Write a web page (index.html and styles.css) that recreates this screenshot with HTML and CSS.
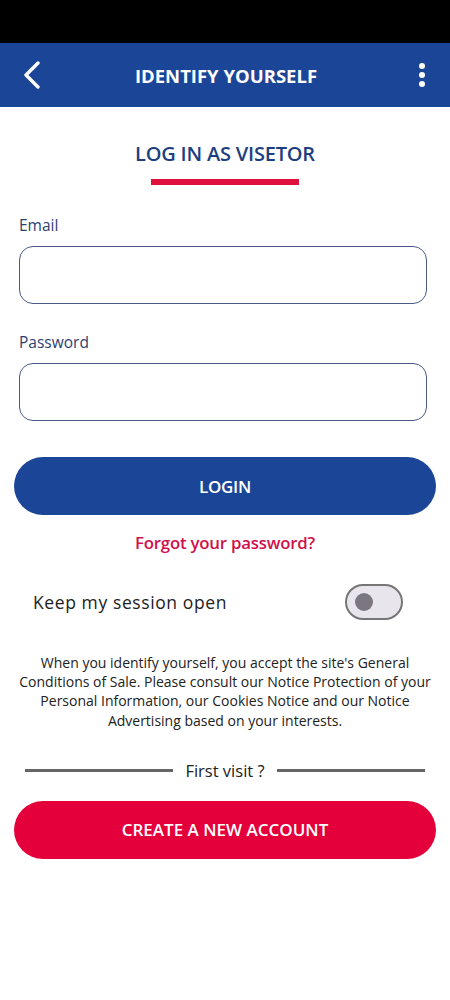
FILE: index.html
```html
<!DOCTYPE html>
<html lang="en">
<head>
    <meta charset="UTF-8">
    <meta name="viewport" content="width=device-width, initial-scale=1.0">
    <title>Identify yourself</title>
    <link rel="stylesheet" href="styles.css">
</head>
<body>
    <div class="status_bar"></div>
    <header class="top_bar">
        <a href="#" class="back">
            <svg width="18" height="28" viewBox="0 0 18 28">
                <path d="M15 2 L3 14 L15 26" fill="none" stroke="#fff" stroke-width="3.4" stroke-linecap="round" stroke-linejoin="round"/>
            </svg>
        </a>
        <h1>IDENTIFY YOURSELF</h1>
        <a href="#" class="more">
            <span></span><span></span><span></span>
        </a>
    </header>

    <main class="content">
        <h2 class="tab_title">LOG IN AS VISETOR</h2>
        <div class="tab_line"></div>

        <form class="login_form">
            <label class="field_label" for="email">Email</label>
            <input type="email" id="email" class="field">
            <label class="field_label" for="password">Password</label>
            <input type="password" id="password" class="field">

            <button type="button" class="btn btn_login">LOGIN</button>
        </form>

        <a href="#" class="forgot">Forgot your password?</a>

        <div class="session_row">
            <span>Keep my session open</span>
            <span class="toggle"><span class="knob"></span></span>
        </div>

        <p class="notice">When you identify yourself, you accept the site's General Conditions of Sale. Please consult our Notice Protection of your Personal Information, our Cookies Notice and our Notice Advertising based on your interests.</p>

        <div class="divider">
            <span class="line"></span>
            <span class="divider_text">First visit ?</span>
            <span class="line"></span>
        </div>

        <button type="button" class="btn btn_create">CREATE A NEW ACCOUNT</button>
    </main>
</body>
</html>
```

FILE: styles.css
```css
* {
    margin: 0;
    padding: 0;
    box-sizing: border-box;
}
body {
    width: 450px;
    height: 1000px;
    background: #fff;
    font-family: "Open Sans", "Noto Sans", sans-serif;
    color: #222;
}
.status_bar {
    height: 43px;
    background: #000;
}
.top_bar {
    height: 64px;
    background: #1b4596;
    display: flex;
    align-items: center;
    justify-content: space-between;
    padding: 0 25px 0 23px;
}
.top_bar h1 {
    color: #fff;
    font-size: 18.5px;
    font-weight: 700;
    letter-spacing: 0;
    margin-left: 4px;
}
.back {
    display: flex;
    width: 20px;
}
.more {
    display: flex;
    flex-direction: column;
    gap: 3px;
    width: 20px;
    align-items: flex-end;
}
.more span {
    display: block;
    width: 6px;
    height: 6px;
    border-radius: 50%;
    background: #fff;
}
.content {
    padding: 0 14px;
    display: flex;
    flex-direction: column;
}
.tab_title {
    margin-top: 35px;
    text-align: center;
    color: #1d3f80;
    font-size: 20px;
    font-weight: 600;
    letter-spacing: -0.2px;
    line-height: 24px;
}
.tab_line {
    width: 148px;
    height: 6px;
    background: #e0103c;
    margin: 13px auto 0;
}
.login_form {
    display: flex;
    flex-direction: column;
    margin-top: 30px;
}
.field_label {
    color: #2e4070;
    font-size: 15.5px;
    line-height: 20px;
    padding-left: 5px;
}
.field {
    margin: 11px 9px 0 5px;
    height: 58px;
    border: 1.5px solid #4a5a86;
    border-radius: 14px;
    background: #fff;
    outline: none;
}
.field + .field_label {
    margin-top: 28px;
}
.btn {
    height: 58px;
    border: none;
    border-radius: 29px;
    color: #fff;
    font-family: "Open Sans", "Noto Sans", sans-serif;
    font-size: 17px;
    font-weight: 600;
    letter-spacing: 0;
}
.btn_login {
    margin-top: 36px;
    background: #1b4596;
    letter-spacing: -0.3px;
}
.forgot {
    margin-top: 17px;
    text-align: center;
    color: #d0104a;
    font-size: 16.8px;
    font-weight: 600;
    letter-spacing: -0.2px;
    text-decoration: none;
    line-height: 22px;
}
.session_row {
    margin-top: 30px;
    display: flex;
    align-items: center;
    justify-content: space-between;
    padding: 0 33px 0 19px;
    font-size: 17.5px;
    color: #222;
    letter-spacing: 0.6px;
}
.toggle {
    display: flex;
    align-items: center;
    width: 58px;
    height: 36px;
    border: 2px solid #767676;
    border-radius: 18px;
    background: #e9e5ec;
    padding-left: 8px;
}
.knob {
    width: 18px;
    height: 18px;
    border-radius: 50%;
    background: #7c7680;
}
.notice {
    margin-top: 33px;
    text-align: center;
    font-size: 14px;
    line-height: 19.2px;
    color: #222;
    padding: 0 2px;
}
.divider {
    margin-top: 29px;
    display: flex;
    align-items: center;
    gap: 12px;
    padding: 0 11px;
}
.line {
    flex: 1;
    height: 3px;
    background: #666;
}
.divider_text {
    font-size: 16.5px;
    color: #222;
}
.btn_create {
    margin-top: 19px;
    background: #e4003a;
}
```
